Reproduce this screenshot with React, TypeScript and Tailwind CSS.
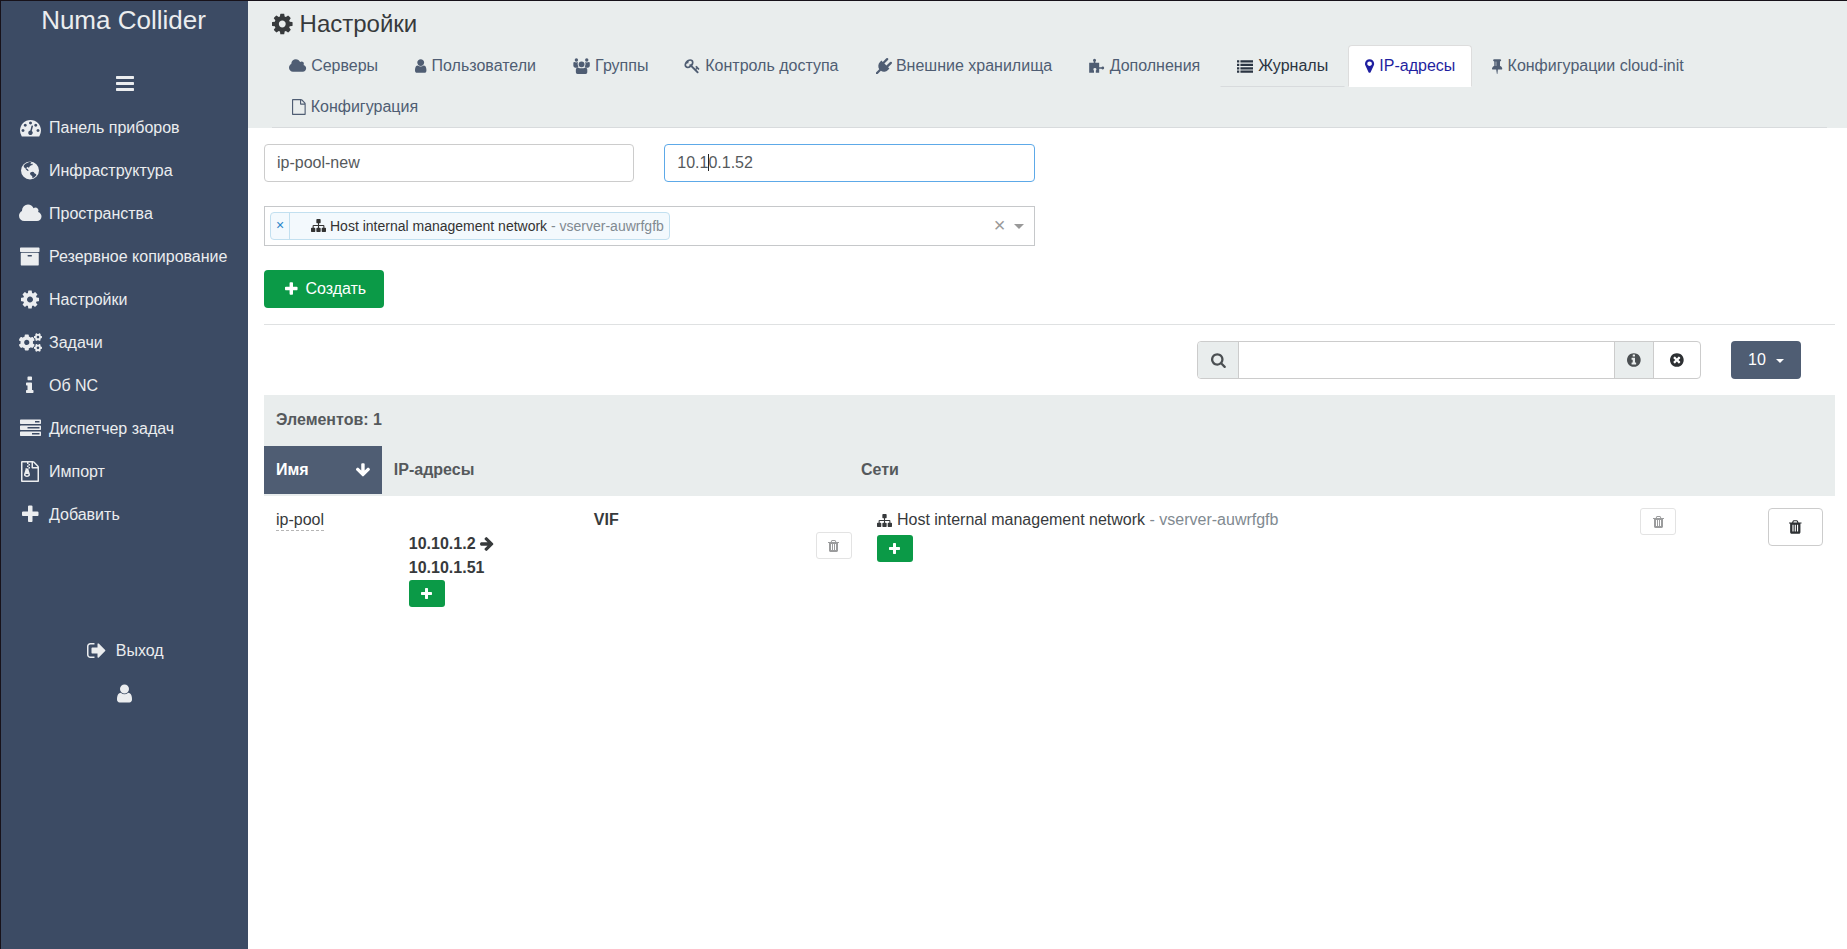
import { useState } from "react";
import { FaCogs } from "react-icons/fa";

// [viewBox x, viewBox width, path], all on a 1792 unit high grid
const glyphs: Record<string, [number, number, string]> = {
  cog: [128, 1536, "M1152 896q0-106-75-181t-181-75-181 75-75 181 75 181 181 75 181-75 75-181zm512-109v222q0 12-8 23t-20 13l-185 28q-19 54-39 91 35 50 107 138 10 12 10 25t-9 23q-27 37-99 108t-94 71q-12 0-26-9l-138-108q-44 23-91 38-16 136-29 186-7 28-36 28h-222q-14 0-24.5-8.5t-11.5-21.5l-28-184q-49-16-90-37l-141 107q-10 9-25 9-14 0-25-11-126-114-165-168-7-10-7-23 0-12 8-23 15-21 51-66.5t54-70.5q-27-50-41-99l-183-27q-13-2-21-12.5t-8-23.5v-222q0-12 8-23t19-13l186-28q14-46 39-92-40-57-107-138-10-12-10-24 0-10 9-23 26-36 98.5-107.5t94.5-71.5q13 0 26 10l138 107q44-23 91-38 16-136 29-186 7-28 36-28h222q14 0 24.5 8.5t11.5 21.5l28 184q49 16 90 37l142-107q9-9 24-9 13 0 25 10 129 119 165 170 7 8 7 22 0 12-8 23-15 21-51 66.5t-54 70.5q26 50 41 98l183 28q13 2 21 12.5t8 23.5z"],
  cloud: [64, 1920, "M1984 1152q0 159-112.5 271.5t-271.5 112.5h-1088q-185 0-316.5-131.5t-131.5-316.5q0-132 71-241.5t187-163.5q-2-28-2-43 0-212 150-362t362-150q158 0 286.5 88t187.5 230q70-62 166-62 106 0 181 75t75 181q0 75-41 138 129 30 213 134.5t84 239.5z"],
  plus: [192, 1408, "M1600 736v192q0 40-28 68t-68 28h-416v416q0 40-28 68t-68 28h-192q-40 0-68-28t-28-68v-416h-416q-40 0-68-28t-28-68v-192q0-40 28-68t68-28h416v-416q0-40 28-68t68-28h192q40 0 68 28t28 68v416h416q40 0 68 28t28 68z"],
  bars: [128, 1536, "M1664 1344v128q0 26-19 45t-45 19h-1408q-26 0-45-19t-19-45v-128q0-26 19-45t45-19h1408q26 0 45 19t19 45zm0-512v128q0 26-19 45t-45 19h-1408q-26 0-45-19t-19-45v-128q0-26 19-45t45-19h1408q26 0 45 19t19 45zm0-512v128q0 26-19 45t-45 19h-1408q-26 0-45-19t-19-45v-128q0-26 19-45t45-19h1408q26 0 45 19t19 45z"],
  user: [256, 1280, "M1536 1399q0 109-62.5 187t-150.5 78h-854q-88 0-150.5-78t-62.5-187q0-85 8.5-160.5t31.5-152 58.5-131 94-89 134.5-34.5q131 128 313 128t313-128q76 0 134.5 34.5t94 89 58.5 131 31.5 152 8.5 160.5zm-256-887q0 159-112.5 271.5t-271.5 112.5-271.5-112.5-112.5-271.5 112.5-271.5 271.5-112.5 271.5 112.5 112.5 271.5z"],
  users: [0, 1920, "M960 380a330 330 0 1 1 0 660a330 330 0 1 1 0-660zM380 40a190 190 0 1 1 0 380a190 190 0 1 1 0-380zM1540 40a190 190 0 1 1 0 380a190 190 0 1 1 0-380zM40 560q0-100 100-100q240 100 420 0q-40 100-40 220q0 160 90 280q-90 50-120 120h-250q-200 0-200-200zM1880 560q0-100-100-100q-240 100-420 0q40 100 40 220q0 160-90 280q90 50 120 120h250q200 0 200-200zM320 1300q0-200 210-240q430 190 860 0q210 40 210 240v300q0 180-180 180h-920q-180 0-180-180z"],
  info: [576, 640, "M1216 1344v128q0 26-19 45t-45 19h-512q-26 0-45-19t-19-45v-128q0-26 19-45t45-19h64v-384h-64q-26 0-45-19t-19-45v-128q0-26 19-45t45-19h384q26 0 45 19t19 45v576h64q26 0 45 19t19 45zm-128-1152v192q0 26-19 45t-45 19h-256q-26 0-45-19t-19-45v-192q0-26 19-45t45-19h256q26 0 45 19t19 45z"],
  search: [64, 1664, "M1216 832q0-185-131.5-316.5t-316.5-131.5-316.5 131.5-131.5 316.5 131.5 316.5 316.5 131.5 316.5-131.5 131.5-316.5zm512 832q0 52-38 90t-90 38q-54 0-90-38l-343-342q-179 124-399 124-143 0-273.5-55.5t-225-150-150-225-55.5-273.5 55.5-273.5 150-225 225-150 273.5-55.5 273.5 55.5 225 150 150 225 55.5 273.5q0 220-124 399l343 343q37 37 37 90z"],
  timesCircle: [128, 1536, "M1277 1122q0-26-19-45l-181-181 181-181q19-19 19-45 0-27-19-46l-90-90q-19-19-46-19-26 0-45 19l-181 181-181-181q-19-19-45-19-27 0-46 19l-90 90q-19 19-19 46 0 26 19 45l181 181-181 181q-19 19-19 45 0 27 19 46l90 90q19 19 46 19 26 0 45-19l181-181 181 181q19 19 45 19 27 0 46-19l90-90q19-19 19-46zm387-226q0 209-103 385.5t-279.5 279.5-385.5 103-385.5-103-279.5-279.5-103-385.5 103-385.5 279.5-279.5 385.5-103 385.5 103 279.5 279.5 103 385.5z"],
  infoCircle: [128, 1536, "M1152 1376v-160q0-14-9-23t-23-9h-96v-512q0-14-9-23t-23-9h-320q-14 0-23 9t-9 23v160q0 14 9 23t23 9h96v320h-96q-14 0-23 9t-9 23v160q0 14 9 23t23 9h448q14 0 23-9t9-23zm-128-896v-160q0-14-9-23t-23-9h-192q-14 0-23 9t-9 23v160q0 14 9 23t23 9h192q14 0 23-9t9-23zm640 416q0 209-103 385.5t-279.5 279.5-385.5 103-385.5-103-279.5-279.5-103-385.5 103-385.5 279.5-279.5 385.5-103 385.5 103 279.5 279.5 103 385.5z"],
  marker: [384, 1024, "M1152 640q0-106-75-181t-181-75-181 75-75 181 75 181 181 75 181-75 75-181zm256 0q0 109-33 179l-364 774q-16 33-47.5 52t-67.5 19-67.5-19-46.5-52l-365-774q-33-70-33-179 0-212 150-362t362-150 362 150 150 362z"],
  sitemap: [0, 1792, "M1792 1248v320q0 40-28 68t-68 28h-320q-40 0-68-28t-28-68v-320q0-40 28-68t68-28h96v-192h-512v192h96q40 0 68 28t28 68v320q0 40-28 68t-68 28h-320q-40 0-68-28t-28-68v-320q0-40 28-68t68-28h96v-192h-512v192h96q40 0 68 28t28 68v320q0 40-28 68t-68 28h-320q-40 0-68-28t-28-68v-320q0-40 28-68t68-28h96v-192q0-52 38-90t90-38h512v-192h-96q-40 0-68-28t-28-68v-320q0-40 28-68t68-28h320q40 0 68 28t28 68v320q0 40-28 68t-68 28h-96v192h512q52 0 90 38t38 90v192h96q40 0 68 28t28 68z"],
  arrow: [117, 1558, "M1675 832q0 53-37 90l-651 652q-39 37-91 37-53 0-90-37l-651-652q-38-36-38-90 0-53 38-91l74-75q39-37 91-37 53 0 90 37l294 294v-704q0-52 38-90t90-38h128q52 0 90 38t38 90v704l294-294q37-37 90-37 52 0 91 37l75 75q37 39 37 91z"],
  list: [0, 1792, "M0 256h256v256h-256zM0 640h256v256h-256zM0 1024h256v256h-256zM0 1408h256v256h-256zM384 256h1408v256h-1408zM384 640h1408v256h-1408zM384 1024h1408v256h-1408zM384 1408h1408v256h-1408z"],
  archive: [64, 1664, "M1088 832q0-26-19-45t-45-19h-256q-26 0-45 19t-19 45 19 45 45 19h256q26 0 45-19t19-45zm576-192v960q0 26-19 45t-45 19h-1408q-26 0-45-19t-19-45v-960q0-26 19-45t45-19h1408q26 0 45 19t19 45zm64-448v256q0 26-19 45t-45 19h-1536q-26 0-45-19t-19-45v-256q0-26 19-45t45-19h1536q26 0 45 19t19 45z"],
  gauge: [0, 1792, "M384 1152q0-53-37.5-90.5t-90.5-37.5-90.5 37.5-37.5 90.5 37.5 90.5 90.5 37.5 90.5-37.5 37.5-90.5zm192-448q0-53-37.5-90.5t-90.5-37.5-90.5 37.5-37.5 90.5 37.5 90.5 90.5 37.5 90.5-37.5 37.5-90.5zm428 481l101-382q6-26-7.5-48.5t-38.5-29.5-48 6.5-30 39.5l-101 382q-60 5-107 43.5t-63 98.5q-20 77 20 146t117 89 146-20 89-117q16-60-6-117t-72-91zm660-33q0-53-37.5-90.5t-90.5-37.5-90.5 37.5-37.5 90.5 37.5 90.5 90.5 37.5 90.5-37.5 37.5-90.5zm-640-640q0-53-37.5-90.5t-90.5-37.5-90.5 37.5-37.5 90.5 37.5 90.5 90.5 37.5 90.5-37.5 37.5-90.5zm448 192q0-53-37.5-90.5t-90.5-37.5-90.5 37.5-37.5 90.5 37.5 90.5 90.5 37.5 90.5-37.5 37.5-90.5zm320 448q0 261-141 483-19 29-54 29h-1402q-35 0-54-29-141-221-141-483 0-182 71-348t191-286 286-191 348-71 348 71 286 191 191 286 71 348z"],
  globe: [128, 1536, "M896 128a768 768 0 1 1 0 1536a768 768 0 1 1 0-1536zM640 250q-180 70-290 230l40 150 100 60 60 130 150 110 90-30-100-130-90-20 20-130 110-20 70 80 60-130 130-100 90-10 60-90-80-50-60 60-70-80 100-60-150-70zM1130 1000l-180 40-60 130 80 140 110 60 30 180q210-70 340-260l-60-90-120-70-40-90z"],
  signOut: [64, 1568, "M704 1440q0 4 1 20t.5 26.5-3 23.5-10 19.5-20.5 6.5h-320q-119 0-203.5-84.5t-84.5-203.5v-704q0-119 84.5-203.5t203.5-84.5h320q13 0 22.5 9.5t9.5 22.5q0 4 1 20t.5 26.5-3 23.5-10 19.5-20.5 6.5h-320q-66 0-113 47t-47 113v704q0 66 47 113t113 47h312l11.5 1 11.5 3 8 5.5 7 9 2 13.5zm928-544q0 26-19 45l-544 544q-19 19-45 19t-45-19-19-45v-288h-448q-26 0-45-19t-19-45v-384q0-26 19-45t45-19h448v-288q0-26 19-45t45-19 45 19l544 544q19 19 19 45z"],
  file: [128, 1536, "M1596 380q28 28 48 76t20 88v1152q0 40-28 68t-68 28h-1344q-40 0-68-28t-28-68v-1600q0-40 28-68t68-28h896q40 0 88 20t76 48zm-444-244v376h376q-10-29-22-41l-313-313q-12-12-41-22zm384 1528v-1024h-416q-40 0-68-28t-28-68v-416h-768v1536h1280z"],
  fileZip: [128, 1536, "M1596 380q28 28 48 76t20 88v1152q0 40-28 68t-68 28h-1344q-40 0-68-28t-28-68v-1600q0-40 28-68t68-28h896q40 0 88 20t76 48zm-444-244v376h376q-10-29-22-41l-313-313q-12-12-41-22zm384 1528v-1024h-416q-40 0-68-28t-28-68v-416h-768v1536h1280zM640 128h128v128h-128zM768 256h128v128h-128zM640 384h128v128h-128zM768 512h128v128h-128zM640 640h128v128h-128zM780 768l107 349q8 27 8 52 0 83-72.5 137.5t-183.500 54.500-183.500-54.500-72.500-137.500q0-25 8-52 21-63 120-396v-113h128v160zM640 1100q-53 0-90.500 19t-37.500 45 37.500 45 90.500 19 90.500-19 37.500-45-37.500-45-90.500-19z"],
  pin: [320, 1152, "M800 864v-448q0-14-9-23t-23-9-23 9-9 23v448q0 14 9 23t23 9 23-9 9-23zm672 352q0 26-19 45t-45 19h-429l-51 483q-2 12-10.5 20.5t-20.5 8.500h-1q-27 0-32-27l-76-485h-404q-26 0-45-19t-19-45q0-123 78.500-221.500t177.500-98.500v-512q-52 0-90-38t-38-90 38-90 90-38h640q52 0 90 38t38 90-38 90-90 38v512q99 0 177.500 98.500t78.500 221.500z"],
  plug: [0, 1728, "M1755 453q37 38 37 90.500t-37 90.500l-401 400 150 150-160 160q-163 163-389.500 186.500t-411.500-100.500l-362 362h-181v-181l362-362q-124-185-100.500-411.500t186.500-389.500l160-160 150 150 400-401q38-37 91-37t90 37 37 90.500-37 90.500l-400 401 234 234 401-400q38-37 91-37t90 37z"],
  tasks: [0, 1792, "M1024 1408h640v-128h-640v128zm-384-512h1024v-128h-1024v128zm640-512h384v-128h-384v128zm512 832v256q0 26-19 45t-45 19h-1664q-26 0-45-19t-19-45v-256q0-26 19-45t45-19h1664q26 0 45 19t19 45zm0-512v256q0 26-19 45t-45 19h-1664q-26 0-45-19t-19-45v-256q0-26 19-45t45-19h1664q26 0 45 19t19 45zm0-512v256q0 26-19 45t-45 19h-1664q-26 0-45-19t-19-45v-256q0-26 19-45t45-19h1664q26 0 45 19t19 45z"],
  key: [64, 1664, "M832 512q0-80-56-136t-136-56-136 56-56 136q0 42 19 83-41-19-83-19-80 0-136 56t-56 136 56 136 136 56 136-56 56-136q0-42-19-83 41 19 83 19 80 0 136-56t56-136zm851 704q0 17-49 66t-66 49q-9 0-28.500-16t-36.500-33-38.500-40-24.500-26l-96 96 220 220q28 28 28 68 0 42-39 81t-81 39q-40 0-68-28l-671-671q-176 131-365 131-163 0-265.500-102.500t-102.500-265.500q0-160 95-313t248-248 313-95q163 0 265.500 102.500t102.500 265.500q0 189-131 365l355 355 96-96q-3-3-26-24.500t-40-38.500-33-36.500-16-28.500q0-17 49-66t66-49q13 0 23 10 6 6 46 44.500t82 79.500 86.500 86 73 78 28.500 41z"],
  puzzle: [0, 1728, "M20 520h510v-110q-80-60-80-160q0-170 170-170t170 170q0 100-80 160v110h430v520h250q60-80 150-80q160 0 160 160t-160 160q-90 0-150-80h-250v460h-380v-240q70-60 70-150q0-140-170-140t-170 140q0 90 70 150v240h-540z"],
  trash: [192, 1408, "M704 1376v-704q0-14-9-23t-23-9h-64q-14 0-23 9t-9 23v704q0 14 9 23t23 9h64q14 0 23-9t9-23zm256 0v-704q0-14-9-23t-23-9h-64q-14 0-23 9t-9 23v704q0 14 9 23t23 9h64q14 0 23-9t9-23zm256 0v-704q0-14-9-23t-23-9h-64q-14 0-23 9t-9 23v704q0 14 9 23t23 9h64q14 0 23-9t9-23zm-544-992h448l-48-117q-7-9-17-11h-317q-10 2-17 11zm928 32v64q0 14-9 23t-23 9h-96v948q0 83-47 143.500t-113 60.500h-832q-66 0-113-58.500t-47-141.500v-952h-96q-14 0-23-9t-9-23v-64q0-14 9-23t23-9h309l70-167q15-37 54-63t79-26h320q40 0 79 26t54 63l70 167h309q14 0 23 9t9 23z"],
};

function Icon({ name, className = "h-4" }: { name: string; className?: string }) {
  const [x, w, d] = glyphs[name];
  return (
    <svg
      viewBox={`${x} 0 ${w} 1792`}
      className={`${className} w-auto shrink-0 overflow-visible`}
      fill="currentColor"
      fillRule="evenodd"
      aria-hidden="true"
    >
      <path d={d} />
    </svg>
  );
}

const menu = [
  { icon: "gauge", label: "Панель приборов" },
  { icon: "globe", label: "Инфраструктура" },
  { icon: "cloud", label: "Пространства" },
  { icon: "archive", label: "Резервное копирование" },
  { icon: "cog", label: "Настройки" },
  { icon: "cogs", label: "Задачи" },
  { icon: "info", label: "Об NC" },
  { icon: "tasks", label: "Диспетчер задач" },
  { icon: "fileZip", label: "Импорт" },
  { icon: "plus", label: "Добавить" },
];

const tabs = [
  { icon: "cloud", label: "Серверы", state: "" },
  { icon: "user", label: "Пользователи", state: "" },
  { icon: "users", label: "Группы", state: "" },
  { icon: "key", label: "Контроль доступа", state: "" },
  { icon: "plug", label: "Внешние хранилища", state: "" },
  { icon: "puzzle", label: "Дополнения", state: "" },
  { icon: "list", label: "Журналы", state: "hover" },
  { icon: "marker", label: "IP-адресы", state: "active" },
  { icon: "pin", label: "Конфигурации cloud-init", state: "" },
  { icon: "file", label: "Конфигурация", state: "" },
];

function tabClass(state: string) {
  if (state === "active") return "border-[#ddd] border-b-white bg-white text-[#1f1fa0]";
  if (state === "hover") return "border-transparent border-b-[#d8dbdd] text-[#2b3543]";
  return "border-transparent text-[#4f5d73]";
}

function Sidebar() {
  return (
    <nav className="w-[248px] shrink-0 border-l border-[#17121a] bg-[#3c4b64] text-[#ebedef]">
      <a href="#" className="block pr-0.5 text-center text-[26px] leading-[38px]">
        Numa Collider
      </a>
      <button type="button" aria-label="Меню" className="mt-[22px] flex h-11 w-full items-center justify-center">
        <Icon name="bars" className="h-[21px]" />
      </button>
      <ul className="pt-px">
        {menu.map((item) => (
          <li key={item.label}>
            <a href="#" className="flex h-[43px] items-center gap-[5px] pl-[15px]">
              <span className="flex w-7 shrink-0 justify-center">
                {item.icon === "cogs" ? (
                  <FaCogs className="size-[23px]" />
                ) : (
                  <Icon name={item.icon} className="h-[21px]" />
                )}
              </span>
              {item.label}
            </a>
          </li>
        ))}
      </ul>
      <a href="#" className="mt-[93px] flex h-[43px] items-center justify-center gap-2.5 pl-0.5">
        <Icon name="signOut" className="h-[21px]" />
        Выход
      </a>
      <a href="#" aria-label="Профиль" className="flex h-[43px] items-center justify-center">
        <Icon name="user" className="h-[21px]" />
      </a>
    </nav>
  );
}

function AddButton() {
  return (
    <button
      type="button"
      aria-label="Добавить"
      className="flex h-[27px] w-9 items-center justify-center rounded-[3px] bg-[#0b9a47] text-white"
    >
      <Icon name="plus" className="h-[14px]" />
    </button>
  );
}

function SmallDelete() {
  return (
    <button
      type="button"
      disabled
      aria-label="Удалить"
      className="flex h-[27px] w-9 items-center justify-center rounded-[3px] border border-[#e3e3e3] text-[#9b9c9d]"
    >
      <Icon name="trash" className="h-[14px]" />
    </button>
  );
}

function Network() {
  return (
    <>
      <Icon name="sitemap" className="h-[15px]" />
      <span>
        Host internal management network <span className="text-[#818a91]">- vserver-auwrfgfb</span>
      </span>
    </>
  );
}

function CreateForm() {
  const [name, setName] = useState("ip-pool-new");
  const [ips, setIps] = useState("10.10.1.52");

  return (
    <form
      onSubmit={(e) => e.preventDefault()}
      className="grid grid-cols-4 gap-x-[30px] gap-y-6 border-b border-[#dfe1e2] pb-4"
    >
      <input
        type="text"
        aria-label="Имя"
        value={name}
        onChange={(e) => setName(e.target.value)}
        className="h-[38px] w-full rounded border border-[#ccc] bg-white px-3 text-[#55595c]"
      />
      <div className="relative">
        <input
          type="text"
          aria-label="IP-адресы"
          value={ips}
          onChange={(e) => setIps(e.target.value)}
          className="h-[38px] w-full rounded border border-[#5da9e8] bg-white px-3 text-[#55595c] caret-transparent outline-none"
        />
        {/* text caret */}
        <span className="pointer-events-none absolute top-[10px] left-11 h-[17px] w-px bg-[#222]" />
      </div>
      <div
        role="combobox"
        aria-label="Сети"
        aria-expanded="false"
        className="col-span-2 col-start-1 flex h-10 items-center border border-[#c6c8ca] pr-2.5 pb-px pl-[5px]"
      >
        <div className="flex h-7 items-stretch rounded-sm border border-[#c2e0f0] bg-[#f3f9fd] text-sm text-[#333]">
          <button type="button" aria-label="Убрать" className="w-[19px] border-r border-[#c2e0f0] pb-0.5 text-[#2b83c9]">
            ×
          </button>
          <span className="flex items-center gap-1 pr-[5px] pl-[21px]">
            <Network />
          </span>
        </div>
        <button type="button" aria-label="Очистить" className="ml-auto pb-0.5 text-xl leading-5 text-[#999]">
          ×
        </button>
        <button type="button" aria-label="Открыть" className="ml-2">
          <svg viewBox="0 0 10 5" className="mt-0.5 h-[5px] w-[10px] fill-[#999]">
            <path d="M0 0h10l-5 5z" />
          </svg>
        </button>
      </div>
      <div className="col-span-4">
        <button
          type="submit"
          className="flex h-[38px] w-[120px] items-center justify-center gap-2 rounded bg-[#0b9a47] pl-[3px] text-white"
        >
          <Icon name="plus" />
          Создать
        </button>
      </div>
    </form>
  );
}

function Toolbar() {
  const [filter, setFilter] = useState("");

  return (
    <div className="flex justify-end gap-[30px] py-4 pr-[34px]">
      <div className="flex h-[38px] w-[504px] rounded border border-[#ccc] text-[#4b4f52]">
        <span className="flex w-10 items-center justify-center rounded-l bg-[#e9eded]">
          <Icon name="search" />
        </span>
        <input
          type="text"
          aria-label="Поиск"
          value={filter}
          onChange={(e) => setFilter(e.target.value)}
          className="min-w-0 flex-1 border-x border-[#ccc] px-3 outline-none"
        />
        <button type="button" aria-label="Справка" className="flex w-[38px] items-center justify-center bg-[#e9eded]">
          <Icon name="infoCircle" />
        </button>
        <button
          type="button"
          aria-label="Очистить"
          className="flex w-[47px] items-center justify-center border-l border-[#ccc] text-[#2d3033]"
        >
          <Icon name="timesCircle" />
        </button>
      </div>
      <button
        type="button"
        aria-haspopup="menu"
        className="flex h-[38px] w-[70px] items-center justify-center gap-2.5 rounded bg-[#4f5d73] text-white"
      >
        10
        <svg viewBox="0 0 8 4" className="mt-0.5 h-1 w-2 fill-current">
          <path d="M0 0h8l-4 4z" />
        </svg>
      </button>
    </div>
  );
}

function PoolsTable() {
  return (
    <table className="w-full table-fixed text-left">
      <colgroup>
        <col className="w-[7.5%]" />
        <col className="w-[30.5%]" />
        <col />
        <col className="w-[5%]" />
      </colgroup>
      <thead className="bg-[#e9eded] text-[#55595c]">
        <tr className="h-[51px]">
          <th colSpan={4} className="px-3 pb-0.5">
            Элементов: 1
          </th>
        </tr>
        <tr className="h-12">
          <th className="bg-[#4f5d73] px-3 text-white">
            <button type="button" className="flex w-full items-center justify-between font-bold">
              Имя
              <Icon name="arrow" />
            </button>
          </th>
          <th className="px-3">IP-адресы</th>
          <th>Сети</th>
          <th />
        </tr>
        <tr className="h-0.5">
          <td colSpan={4} />
        </tr>
      </thead>
      <tbody className="align-top">
        <tr>
          <td className="px-3 pt-3">
            <a href="#" className="inline-block border-b border-dashed border-[#b5b5b5] leading-5">
              ip-pool
            </a>
          </td>
          <td className="pt-3 pr-[9px] pl-[27px] font-bold">
            <div className="flex">
              <div className="w-[185px] pt-6">
                <div className="flex items-center gap-1">
                  10.10.1.2
                  <span className="-rotate-90">
                    <Icon name="arrow" />
                  </span>
                </div>
                <div>10.10.1.51</div>
                <AddButton />
              </div>
              <div className="flex-1">VIF</div>
              <div className="pt-6">
                <SmallDelete />
              </div>
            </div>
          </td>
          <td className="pt-3 pr-20 pl-4">
            <div className="flex justify-between">
              <div>
                <div className="mb-[3px] flex items-center gap-[5px]">
                  <Network />
                </div>
                <AddButton />
              </div>
              <SmallDelete />
            </div>
          </td>
          <td className="p-3">
            <button
              type="button"
              aria-label="Удалить"
              className="flex h-[38px] w-full items-center justify-center rounded border border-[#ccc] text-[#2d3033]"
            >
              <Icon name="trash" />
            </button>
          </td>
        </tr>
      </tbody>
    </table>
  );
}

export default function App() {
  return (
    <div className="flex min-h-screen border-t border-[#17121a] bg-white font-['Liberation_Sans',Arial,sans-serif] text-base leading-6 text-[#373a3c]">
      <Sidebar />
      <div className="min-w-0 flex-1">
        <header className="bg-[#e9eded] pr-5 pl-6">
          <h1 className="flex h-11 items-center gap-[7px] pt-0.5 text-2xl">
            <Icon name="cog" className="h-6" />
            Настройки
          </h1>
          <ul className="flex flex-wrap gap-x-[3px] border-b border-[#d8dbdd]">
            {tabs.map((tab) => (
              <li key={tab.label} className="-mb-px">
                <a
                  href="#"
                  className={`flex h-[42px] items-center gap-[5px] rounded-t border px-4 ${tabClass(tab.state)}`}
                >
                  {tab.icon === "file" ? (
                    <span className="pl-[3px]">
                      <Icon name="file" />
                    </span>
                  ) : (
                    <Icon name={tab.icon} />
                  )}
                  {tab.label}
                </a>
              </li>
            ))}
          </ul>
        </header>
        <main className="pt-4 pr-3 pl-4">
          <CreateForm />
          <Toolbar />
          <PoolsTable />
        </main>
      </div>
    </div>
  );
}
